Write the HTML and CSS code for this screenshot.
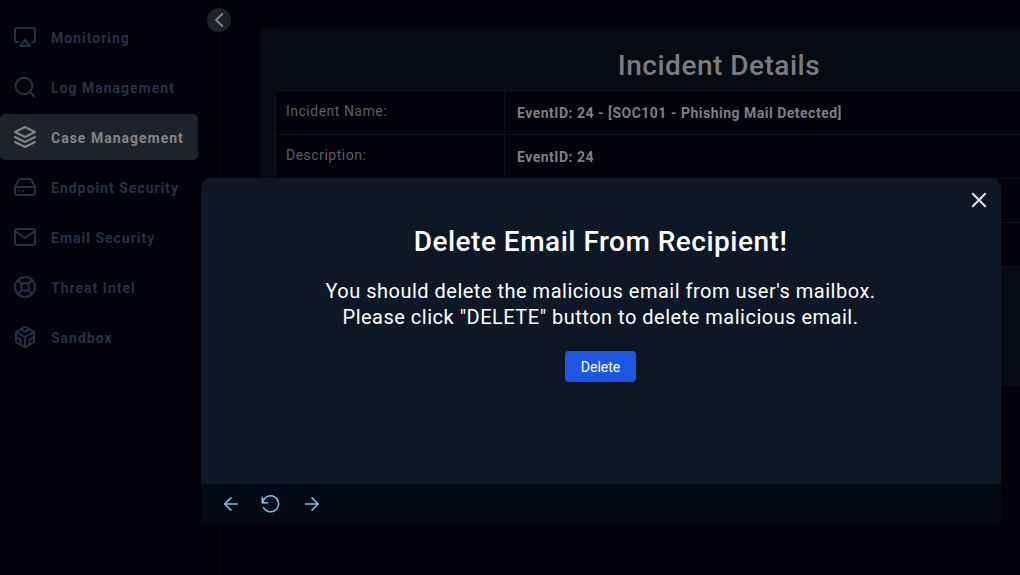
FILE: index.html
```html
<!DOCTYPE html>
<html lang="en">
<head>
<meta charset="utf-8">
<title>Incident Details</title>
<link rel="stylesheet" href="styles.css">
</head>
<body>
<div class="app">
  <aside class="sidebar">
    <nav class="menu">
      <a class="item"><svg class="icon" viewBox="0 0 24 24"><path d="M5 17H4a2 2 0 0 1-2-2V5a2 2 0 0 1 2-2h16a2 2 0 0 1 2 2v10a2 2 0 0 1-2 2h-1"/><path d="M12 15l5 6H7l5-6z"/></svg><span>Monitoring</span></a>
      <a class="item"><svg class="icon" viewBox="0 0 24 24"><circle cx="11" cy="11" r="8.300"/><path d="M21.200 21.200l-4.500-4.500"/></svg><span>Log Management</span></a>
      <a class="item active"><svg class="icon" viewBox="0 0 24 24"><path d="M12 2L2 7l10 5 10-5-10-5z"/><path d="M2 17l10 5 10-5"/><path d="M2 12l10 5 10-5"/></svg><span>Case Management</span></a>
      <a class="item"><svg class="icon" viewBox="0 0 24 24"><path d="M22 12H2"/><path d="M5.450 5.110L2 12v6a2 2 0 0 0 2 2h16a2 2 0 0 0 2-2v-6l-3.450-6.890A2 2 0 0 0 16.760 4H7.240a2 2 0 0 0-1.790 1.110z"/><path d="M6 16h.01M10 16h.01"/></svg><span>Endpoint Security</span></a>
      <a class="item"><svg class="icon" viewBox="0 0 24 24"><rect x="2" y="4" width="20" height="16" rx="2"/><path d="M22 6l-10 7L2 6"/></svg><span>Email Security</span></a>
      <a class="item"><svg class="icon" viewBox="0 0 24 24"><circle cx="12" cy="12" r="10"/><circle cx="12" cy="12" r="4"/><path d="M4.930 4.930l4.240 4.240M14.830 14.830l4.240 4.240M14.830 9.170l4.240-4.240M4.930 19.070l4.240-4.240"/></svg><span>Threat Intel</span></a>
      <a class="item"><svg class="icon" viewBox="0 0 24 24"><path d="M21 16V8a2 2 0 0 0-1-1.730l-7-4a2 2 0 0 0-2 0l-7 4A2 2 0 0 0 3 8v8a2 2 0 0 0 1 1.730l7 4a2 2 0 0 0 2 0l7-4A2 2 0 0 0 21 16z"/><path d="M7.500 4.210l4.500 2.600 4.500-2.600"/><path d="M7.500 19.790V14.600L3 12M21 12l-4.500 2.600v5.190"/><path d="M3.270 6.960L12 12.010l8.730-5.050M12 22.080V12"/></svg><span>Sandbox</span></a>
    </nav>
    <button class="collapse" aria-label="Collapse"><svg viewBox="0 0 24 24"><path d="M15.200 6l-6 6 6 6"/></svg></button>
  </aside>
  <main class="content">
    <section class="card">
      <h1 class="heading">Incident Details</h1>
      <div class="grid">
        <div class="label">Incident Name:</div><div class="value">EventID: 24 - [SOC101 - Phishing Mail Detected]</div>
        <div class="label">Description:</div><div class="value">EventID: 24</div>
        <div class="label"></div><div class="value"></div>
        <div class="label"></div><div class="value"></div>
      </div>
    </section>
  </main>
</div>
<div class="modal" role="dialog">
  <div class="modal-body">
    <button class="close" aria-label="Close"><svg viewBox="0 0 16 16"><path d="M1.800 1.800l12.400 12.400M14.200 1.800L1.800 14.200"/></svg></button>
    <h2 class="title">Delete Email From Recipient!</h2>
    <p class="text">You should delete the malicious email from user's mailbox.<br>Please click "DELETE" button to delete malicious email.</p>
    <button class="delete">Delete</button>
  </div>
  <footer class="modal-footer">
    <svg class="tool" viewBox="0 0 20 20"><path d="M16.300 10H3.700M9.900 3.900L3.800 10l6.100 6.100"/></svg>
    <svg class="tool refresh" viewBox="0 0 20 20"><path d="M2.200 3.300v5.500h5.500M2.700 8.500A8 8 0 1 1 3.500 13.500"/></svg>
    <svg class="tool" viewBox="0 0 20 20"><path d="M4.500 10h12.700M11 3.900l6.100 6.100-6.100 6.100"/></svg>
  </footer>
</div>
</body>
</html>
```
FILE: styles.css
```css
* { box-sizing: border-box; }
body {
  margin: 0;
  height: 575px;
  overflow: hidden;
  background: #02020b;
  font-family: Roboto, "Liberation Sans", sans-serif;
  letter-spacing: 0.5px;
}
button { border: 0; padding: 0; font: inherit; color: inherit; }
svg { fill: none; stroke: currentColor; stroke-width: 2; stroke-linecap: round; stroke-linejoin: round; display: block; }
.app { display: flex; height: 575px; }
.sidebar {
  position: relative;
  flex: 0 0 221px;
  border-right: 1px solid #080d15;
  padding-top: 14px;
}
.menu { display: flex; flex-direction: column; gap: 4px; width: 198px; }
.item {
  display: flex;
  align-items: center;
  gap: 14px;
  height: 46px;
  padding-left: 13px;
  border-radius: 5px;
  color: #253047;
  font-size: 14px;
  font-weight: 700;
  letter-spacing: 1px;
  white-space: nowrap;
}
.item span { padding-top: 2px; }
.item.active { background: #1c2329; color: #858585; }
.icon { width: 24px; height: 24px; }
.collapse {
  position: absolute;
  left: 207px;
  top: 8px;
  width: 24px;
  height: 24px;
  border-radius: 50%;
  background: #1b2228;
  color: #858585;
}
.collapse svg { width: 24px; height: 24px; }
.content { flex: 1; padding: 28px 0 0 39px; overflow: hidden; }
.card {
  width: 918px;
  height: 358px;
  padding: 21px 15px 0;
  border-radius: 6px;
  background: #060b12;
}
.heading {
  margin: 0;
  height: 41px;
  text-align: center;
  font-size: 28px;
  font-weight: 500;
  line-height: 34px;
  color: #7b7c7e;
}
.grid {
  display: grid;
  grid-template-columns: 229px 1fr;
  grid-auto-rows: 44px;
  border: solid #0b111b;
  border-width: 1px 0 0 1px;
  background: #02020b;
  font-size: 14px;
}
.label, .value { border: solid #0b111b; border-width: 0 1px 1px 0; line-height: 20px; }
.label { padding: 10px; color: #5c5f64; }
.value { padding: 12px; color: #7f7f80; font-weight: 700; }
.modal {
  position: absolute;
  left: 201px;
  top: 178px;
  width: 800px;
  border-radius: 10px 10px 0 0;
  overflow: hidden;
  color: #fff;
}
.modal-body { position: relative; height: 306px; padding: 47px 1px 0 0; background: #0e1725; text-align: center; }
.close { position: absolute; right: 14px; top: 14px; background: none; color: #e2e8f0; }
.close svg { width: 16px; height: 16px; }
.title { margin: 0 0 19px; font-size: 28px; font-weight: 500; line-height: 34px; }
.text { margin: 0 0 21px; font-size: 20px; line-height: 26px; }
.delete {
  width: 71px;
  height: 31px;
  border-radius: 4px;
  background: #1c56e1;
  font-size: 14px;
  letter-spacing: 0;
  box-shadow: 0 4px 10px #0003;
}
.modal-footer {
  display: flex;
  align-items: center;
  gap: 20px;
  height: 40px;
  padding-left: 20px;
  background: #040a14;
  color: #7fbfe8;
}
.tool { width: 20px; height: 20px; stroke-width: 1.6; }
.refresh { margin: 0 1px 0 -1px; stroke-width: 1.5; }
```
